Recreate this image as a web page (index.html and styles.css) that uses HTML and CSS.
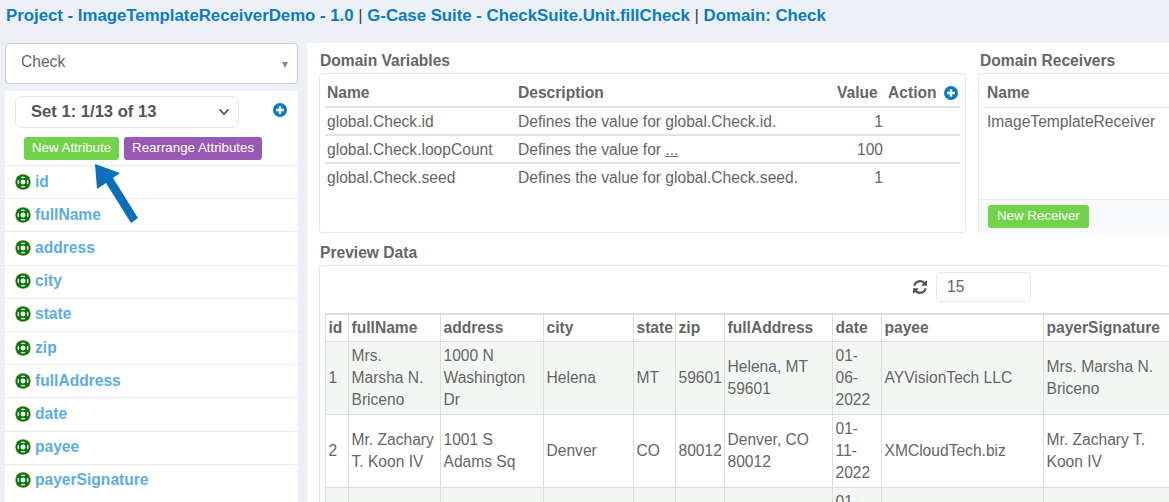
FILE: index.html
```html
<!DOCTYPE html>
<html lang="en">
<head>
    <meta charset="UTF-8">
    <title>G-Case Suite - CheckSuite.Unit.fillCheck</title>
    <link rel="stylesheet" href="styles.css">
</head>
<body>
    <svg class="icon-defs" width="0" height="0">
        <symbol id="lifering" viewBox="0 0 16 16">
            <circle cx="8" cy="8" r="7.900" fill="#c9a94a"/>
            <circle cx="8" cy="8" r="7.400" fill="#cfe9d6"/>
            <path d="M2.600 2.600L6 6M13.400 2.600L10 6M2.600 13.400L6 10M13.400 13.400L10 10" stroke="#0c7410" stroke-width="3.400"/>
            <circle cx="8" cy="8" r="6.500" fill="none" stroke="#0c7410" stroke-width="1.800"/>
            <circle cx="8" cy="8" r="3.200" fill="#fff" stroke="#0c7410" stroke-width="1.500"/>
        </symbol>
        <symbol id="plus" viewBox="0 0 14 14">
            <circle cx="7" cy="7" r="7" fill="#0b7cc1"/>
            <path d="M7 3.200v7.600M3.200 7h7.600" stroke="#fff" stroke-width="2.400"/>
        </symbol>
    </svg>

    <h1 class="page-title">Project - ImageTemplateReceiverDemo - 1.0 <span class="sep">|</span> G-Case Suite - CheckSuite.Unit.fillCheck <span class="sep">|</span> Domain: Check</h1>

    <div class="layout">
        <div class="sidebar">
            <div class="domain-select">
                <span>Check</span>
                <span class="caret"></span>
            </div>

            <div class="attr-panel">
                <div class="set-row">
                    <div class="set-select">
                        <span>Set 1: 1/13 of 13</span>
                        <svg width="12" height="8" viewBox="0 0 12 8"><path d="M1.500 1.500L6 6l4.500-4.500" fill="none" stroke="#444" stroke-width="1.600"/></svg>
                    </div>
                    <svg class="plus-icon" width="14" height="14"><use href="#plus"/></svg>
                </div>
                <div class="btn-row">
                    <span class="btn btn-green">New Attribute</span>
                    <span class="btn btn-purple">Rearrange Attributes</span>
                </div>
                <ul class="attr-list">
                    <li><svg width="16" height="16"><use href="#lifering"/></svg>id</li>
                    <li><svg width="16" height="16"><use href="#lifering"/></svg>fullName</li>
                    <li><svg width="16" height="16"><use href="#lifering"/></svg>address</li>
                    <li><svg width="16" height="16"><use href="#lifering"/></svg>city</li>
                    <li><svg width="16" height="16"><use href="#lifering"/></svg>state</li>
                    <li><svg width="16" height="16"><use href="#lifering"/></svg>zip</li>
                    <li><svg width="16" height="16"><use href="#lifering"/></svg>fullAddress</li>
                    <li><svg width="16" height="16"><use href="#lifering"/></svg>date</li>
                    <li><svg width="16" height="16"><use href="#lifering"/></svg>payee</li>
                    <li><svg width="16" height="16"><use href="#lifering"/></svg>payerSignature</li>
                </ul>
            </div>
        </div>

        <div class="main">
            <div class="top-row">
                <div class="vars">
                    <h4 class="section-title">Domain Variables</h4>
                    <div class="box vars-box">
                        <table class="vars-table">
                            <thead>
                                <tr>
                                    <th class="v-name">Name</th>
                                    <th class="v-desc">Description</th>
                                    <th class="v-value">Value</th>
                                    <th class="v-action">Action <svg width="14" height="14"><use href="#plus"/></svg></th>
                                </tr>
                            </thead>
                            <tbody>
                                <tr><td>global.Check.id</td><td>Defines the value for global.Check.id.</td><td class="num">1</td><td></td></tr>
                                <tr><td>global.Check.loopCount</td><td>Defines the value for <u>...</u></td><td class="num">100</td><td></td></tr>
                                <tr><td>global.Check.seed</td><td>Defines the value for global.Check.seed.</td><td class="num">1</td><td></td></tr>
                            </tbody>
                        </table>
                    </div>
                </div>
                <div class="receivers">
                    <h4 class="section-title">Domain Receivers</h4>
                    <div class="box receivers-box">
                        <div class="receivers-body">
                            <div class="recv-head">Name</div>
                            <div class="recv-item">ImageTemplateReceiver</div>
                        </div>
                        <div class="receivers-foot">
                            <span class="btn btn-green">New Receiver</span>
                        </div>
                    </div>
                </div>
            </div>

            <h4 class="section-title preview-title">Preview Data</h4>
            <div class="box preview-box">
                <div class="preview-tools">
                    <svg width="14" height="14" viewBox="0 0 1536 1536"><path fill="#555" d="M1511 928q0 5-1 7-64 268-268 434.500T764 1536q-146 0-282.500-55T238 1324l-129 129q-19 19-45 19t-45-19-19-45V960q0-26 19-45t45-19h448q26 0 45 19t19 45-19 45l-137 137q71 66 161 102t187 36q134 0 250-65t186-179q11-17 53-117 8-23 30-23h192q13 0 22.500 9.500t9.500 22.500zm25-800v448q0 26-19 45t-45 19h-448q-26 0-45-19t-19-45 19-45l138-138q-148-137-349-137-134 0-250 65T332 500q-11 17-53 117-8 23-30 23H50q-13 0-22.500-9.500T18 608v-7q65-268 270-434.500T768 0q146 0 284 55.500T1297 212l130-129q19-19 45-19t45 19 19 45z"/></svg>
                    <div class="count-input">15</div>
                </div>
                <div class="preview-scroll">
                    <table class="data-table">
                        <colgroup>
                            <col class="c-id"><col class="c-name"><col class="c-addr"><col class="c-city"><col class="c-state"><col class="c-zip"><col class="c-full"><col class="c-date"><col class="c-payee"><col class="c-sig">
                        </colgroup>
                        <thead>
                            <tr><th>id</th><th>fullName</th><th>address</th><th>city</th><th>state</th><th>zip</th><th>fullAddress</th><th>date</th><th>payee</th><th>payerSignature</th></tr>
                        </thead>
                        <tbody>
                            <tr class="odd"><td>1</td><td>Mrs.<br>Marsha N.<br>Briceno</td><td>1000 N<br>Washington<br>Dr</td><td>Helena</td><td>MT</td><td>59601</td><td>Helena, MT 59601</td><td>01-06-2022</td><td>AYVisionTech LLC</td><td>Mrs. Marsha N.<br>Briceno</td></tr>
                            <tr><td>2</td><td>Mr. Zachary<br>T. Koon IV</td><td>1001 S<br>Adams Sq</td><td>Denver</td><td>CO</td><td>80012</td><td>Denver, CO 80012</td><td>01-11-2022</td><td>XMCloudTech.biz</td><td>Mr. Zachary T.<br>Koon IV</td></tr>
                            <tr class="odd"><td></td><td></td><td></td><td></td><td></td><td></td><td></td><td>01-13-2022</td><td></td><td></td></tr>
                        </tbody>
                    </table>
                </div>
            </div>
        </div>
    </div>

    <svg class="arrow" width="50" height="66" viewBox="0 0 50 66">
        <path fill="#0b6fbb" d="M3 1L5 26 14 20 39 60 46 55 21 15 28 10z"/>
    </svg>
</body>
</html>
```

FILE: styles.css
```css
* {
    margin: 0;
    padding: 0;
    box-sizing: border-box;
}

html, body {
    height: 502px;
    overflow: hidden;
}

body {
    position: relative;
    font-family: "Liberation Sans", Arial, sans-serif;
    font-size: 15.6px;
    line-height: 22px;
    color: #666;
    background: #edf0f5;
}

.icon-defs {
    position: absolute;
}

.page-title {
    height: 43px;
    padding: 6px 6px 0;
    font-size: 16.8px;
    line-height: 20px;
    font-weight: bold;
    color: #0b7cc1;
    white-space: nowrap;
}

.page-title .sep {
    font-weight: normal;
    color: #444;
}

.layout {
    display: flex;
    height: 459px;
}

/* left column */
.sidebar {
    width: 307px;
    padding-left: 5px;
    flex-shrink: 0;
}

.domain-select {
    display: flex;
    justify-content: space-between;
    align-items: center;
    width: 293px;
    height: 41px;
    padding: 0 9px 3px 15px;
    background: #fff;
    border: 1px solid #ccc;
    border-radius: 4px;
    color: #666;
}

.caret {
    margin-top: 5px;
    border-left: 3.5px solid transparent;
    border-right: 3.5px solid transparent;
    border-top: 6px solid #888;
}

.attr-panel {
    width: 293px;
    height: 412px;
    margin-top: 7px;
    background: #fff;
}

.set-row {
    display: flex;
    height: 37px;
    padding: 5px 0 0 10px;
}

.set-select {
    display: flex;
    justify-content: space-between;
    align-items: center;
    width: 224px;
    height: 32px;
    padding: 0 8px 0 15px;
    border: 1px solid #e6e6e6;
    border-radius: 6px;
    font-size: 16.6px;
    font-weight: bold;
    color: #555;
}

.plus-icon {
    margin: 7px 0 0 34px;
}

.btn-row {
    display: flex;
    gap: 5px;
    padding: 9px 0 5px 19px;
}

.btn {
    display: inline-block;
    height: 23px;
    padding: 0 8px;
    font-size: 13.3px;
    line-height: 22px;
    color: #fff;
    border-radius: 3px;
    white-space: nowrap;
}

.btn-green {
    background: #72d34a;
}

.btn-purple {
    background: #9b59b6;
}

.attr-list {
    list-style: none;
}

.attr-list li {
    display: flex;
    align-items: center;
    gap: 4px;
    height: 33.2px;
    padding: 0 0 1px 10px;
    border-top: 1px solid #e8ebf0;
    font-weight: bold;
    color: #5dade2;
}

/* right side */
.main {
    flex: 1;
    min-width: 0;
    padding: 8px 0 0 12px;
    background: #fff;
    overflow: hidden;
}

.top-row {
    display: flex;
    gap: 12px;
}

.section-title {
    height: 22px;
    padding-left: 1px;
    font-size: 15.6px;
    line-height: 20px;
    font-weight: bold;
    color: #666;
}

.box {
    background: #fff;
    border: 1px solid #e8e8e8;
    border-radius: 3px;
}

.vars {
    width: 647px;
    flex-shrink: 0;
}

.vars-box {
    height: 160px;
    padding: 0 5px;
}

.vars-table {
    width: 100%;
    border-collapse: collapse;
    table-layout: fixed;
}

.vars-table th {
    height: 33px;
    padding: 5px 2px 0;
    text-align: left;
    color: #666;
    border-bottom: 2px solid #e3e3e3;
}

.vars-table td {
    height: 28px;
    padding: 1px 2px 0;
    border-bottom: 2px solid #e3e3e3;
    white-space: nowrap;
}

.vars-table tr:last-child td {
    padding-top: 0;
    border-bottom: 0;
}

.v-name {
    width: 191px;
}

.v-desc {
    width: 319px;
}

.v-value {
    width: 51px;
}

.v-action {
    white-space: nowrap;
}

.v-action svg {
    margin-left: 3px;
    vertical-align: -2px;
}

.vars-table .num {
    padding-right: 3px;
    text-align: right;
}

.receivers {
    flex: 1;
    min-width: 200px;
}

.receivers .section-title {
    padding-left: 2px;
}

.receivers-box {
    height: 160px;
    border-right: 0;
}

.receivers-body {
    height: 125px;
    padding: 0 5px;
}

.recv-head {
    height: 34px;
    padding: 8px 3px 0;
    font-weight: bold;
    border-bottom: 1px solid #e3e3e3;
}

.recv-item {
    padding: 3px;
}

.receivers-foot {
    height: 34px;
    padding: 4px 9px;
    background: #f7f8f9;
    border-top: 1px solid #e8e8e8;
}

.receivers-foot .btn {
    padding: 0 9px;
}

.preview-title {
    margin-top: 10px;
}

.preview-box {
    height: 239px;
    padding-left: 5px;
    border-right: 0;
}

.preview-tools {
    display: flex;
    align-items: center;
    justify-content: flex-end;
    gap: 9px;
    height: 47px;
    padding: 0 138px 6px 0;
}

.count-input {
    width: 95px;
    height: 30px;
    padding-left: 10px;
    line-height: 28px;
    border: 1px solid #e6e6e6;
    border-radius: 4px;
}

.preview-scroll {
    overflow: hidden;
}

.data-table {
    width: 880px;
    border-collapse: collapse;
    table-layout: fixed;
}

.data-table th,
.data-table td {
    padding: 0 3px 0 2.5px;
    border: 1px solid #ddd;
    text-align: left;
}

.data-table th {
    height: 27px;
    border-top-width: 2px;
    color: #666;
}

.data-table td {
    height: 73px;
}

.data-table tr.odd td {
    background: #f3f7f4;
}

.c-id { width: 23px; }
.c-name { width: 92px; }
.c-addr { width: 103px; }
.c-city { width: 90px; }
.c-state { width: 42px; }
.c-zip { width: 49px; }
.c-full { width: 108px; }
.c-date { width: 49px; }
.c-payee { width: 162px; }
.c-sig { width: 162px; }

.arrow {
    position: absolute;
    left: 92px;
    top: 163px;
}
```
